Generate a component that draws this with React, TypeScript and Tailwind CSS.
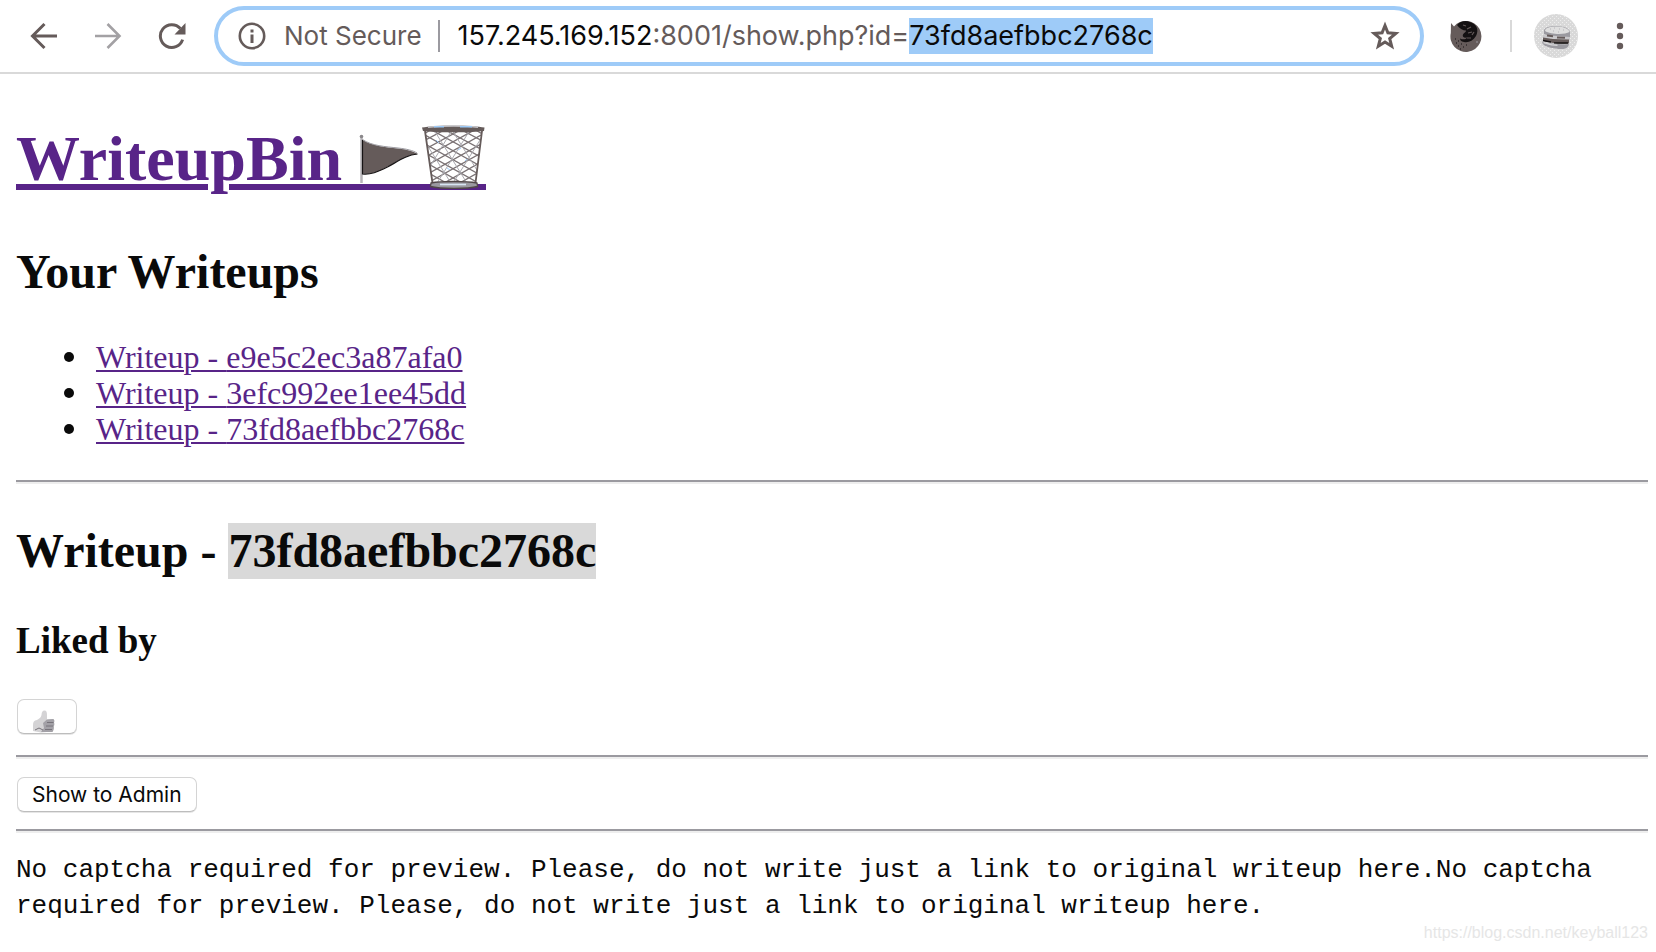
import React from "react";

const writeups = ["e9e5c2ec3a87afa0", "3efc992ee1ee45dd", "73fd8aefbbc2768c"];
const current = "73fd8aefbbc2768c";
const previewText =
  "No captcha required for preview. Please, do not write just a link to original writeup here.";

function BackIcon() {
  return (
    <svg width="28" height="28" viewBox="0 0 28 28" fill="none" stroke="currentColor" strokeWidth="3" aria-hidden="true">
      <path d="M27 14H3M14.5 2L2.5 14l12 12" />
    </svg>
  );
}

function ForwardIcon() {
  return (
    <svg width="28" height="28" viewBox="0 0 28 28" fill="none" stroke="currentColor" strokeWidth="2.6" aria-hidden="true">
      <path d="M1 14h24M13.5 2l12 12-12 12" />
    </svg>
  );
}

function ReloadIcon() {
  return (
    <svg width="28" height="28" viewBox="0 0 28 28" fill="none" aria-hidden="true">
      <path d="M24.6 17.6A11.4 11.4 0 1 1 22.4 6.6" stroke="currentColor" strokeWidth="3" />
      <path d="M27.5 1v11.500H16.500z" fill="currentColor" />
    </svg>
  );
}

function InfoIcon() {
  return (
    <svg width="28" height="28" viewBox="0 0 28 28" fill="none" aria-hidden="true">
      <circle cx="14" cy="14" r="12.2" stroke="currentColor" strokeWidth="2.6" />
      <path d="M12.500 12.500h3V21h-3zM12.500 7.500h3v3h-3z" fill="currentColor" />
    </svg>
  );
}

function StarIcon() {
  return (
    <svg width="30" height="30" viewBox="0 0 30 30" fill="none" stroke="currentColor" strokeWidth="3" aria-hidden="true">
      <path d="M15 4.500l2.900 7.300 7.900.6-6.100 5.100 2 7.800L15 21.100l-6.700 4.200 2-7.800-6.100-5.100 7.900-.6z" />
    </svg>
  );
}

function ExtensionIcon() {
  return (
    <svg width="32" height="32" viewBox="0 0 32 32" aria-hidden="true">
      <path d="M1 3l3 3.500A15.500 15.500 0 1 1 .8 13z" fill="#655b5a" />
      <path d="M7 5c3-4 9-5 13-3 7 2 9 8 6 14-3 5-8 7-12 6-3-.5-4-2-4-3.500 3 1.500 6 1 7-1-3 .5-5-.5-4-3 1-2 3-2 3-4-3 0-7-2-9-5.500z" fill="#141112" />
      <path d="M13 5l3 1M17 9l4-2M18 13l4-1M17 18l4 0M22 15l2-3" stroke="#655b5a" strokeWidth="1.200" />
      <path d="M6 23h1M8 26h1M11 24h1M13 27h1M16 25h1M5 19h1M8 21h1M10 29h1" stroke="#141112" strokeWidth="1.200" />
      <path d="M26 22h2" stroke="#9b9aa0" strokeWidth="1.200" />
    </svg>
  );
}

function BurgerAvatar() {
  return (
    <svg width="44" height="44" viewBox="0 0 44 44" aria-hidden="true">
      <defs>
        <pattern id="grain" width="4" height="4" patternUnits="userSpaceOnUse">
          <path d="M0 0h1v1H0zM2 2h1v1H2z" fill="#eeeeee" />
        </pattern>
      </defs>
      <circle cx="22" cy="22" r="22" fill="#d9d9d9" />
      <circle cx="22" cy="22" r="22" fill="url(#grain)" />
      <path d="M10 17c0-3.500 5-5 12-5s13 2 14 6v5c-8 1-19 0-26-3z" fill="#9b9aa0" />
      <path d="M11 17c0-3 4-4.500 11-4.500s13 2 13.500 5.500c-5 3-19 2.500-24.500-1z" fill="#dfdfdf" />
      <path d="M16 15h1M20 14h1M25 15h1M29 16h1M19 17h1M24 18h1" stroke="#b5b4b8" />
      <path d="M9 21l27 2v3l-27-2z" fill="#c9c8cb" />
      <path d="M13 21.500l6 .800M23 23.500l8 .3" stroke="#655b5a" strokeWidth="2" />
      <path d="M9 23.500l10 1.500 16 .5v4c-9 .5-19-.5-26-2.500z" fill="#655b5a" />
      <path d="M9 26.500l8 1.500M20 29l14 0" stroke="#171415" strokeWidth="1.500" />
      <path d="M8 27.500c8 2.500 18 3 27 2.500-.5 3.500-3 5-7 5-8 0-20-2-20-7.500z" fill="#9b9aa0" />
      <path d="M9.500 28.500l8 2.200 6 .5" stroke="#d4d4d6" strokeWidth="1.500" fill="none" />
    </svg>
  );
}

function FlagIcon() {
  return (
    <svg className="inline-block align-baseline" width="62" height="53" viewBox="1 0 62 53" overflow="visible" aria-label="flag" role="img">
      <path d="M1 57h62v6H1z" fill="currentColor" />
      <path d="M4.500 9v47" stroke="#b7b5b8" strokeWidth="2.500" />
      <circle cx="4.500" cy="9.500" r="1.800" fill="#8b888b" />
      <path d="M5 12.500C15 19 28 20 41 21.500 50 22.500 56 24 60.500 27 50 28 41 34 30 40 20 45.500 14 47.500 5 46.500z" fill="#655b5a" />
      <path d="M5.500 13v34c8 1 15-2 25-7 11-6 19-12 30-13" fill="none" stroke="#171415" strokeWidth="1.200" />
      <path d="M5.500 12.500C15 19 28 19.500 41 21c9 1 15 2.500 19 5" fill="none" stroke="#9b9aa0" strokeWidth="1" />
    </svg>
  );
}

function BinIcon() {
  return (
    <svg className="inline-block align-baseline" width="66" height="54" viewBox="0 0 66 54" overflow="visible" aria-label="wastebasket" role="img">
      <defs>
        <clipPath id="basket">
          <path d="M5 5h57l-6.500 54h-43z" />
        </clipPath>
      </defs>
      <path d="M0 58h66v6H0z" fill="currentColor" />
      <g clipPath="url(#basket)" fill="none" stroke="#7b7375" strokeWidth="1.300">
        <path d="M-4 4l66 37M-4 13l66 37M-4 22l66 37M-4 31l60 34M-4 40l50 28M-4 49l30 17M8 2l58 32M22 2l44 24M38 2l28 15M52 2l14 8" />
        <path d="M70 4L4 41M70 13L4 50M70 22L4 59M70 31L10 65M70 40L20 68M70 49L40 66M58 2L0 34M44 2L0 26M28 2L0 17M14 2L0 10" />
      </g>
      <g clipPath="url(#basket)" fill="none" stroke="#a9a8ae" strokeWidth="1">
        <path d="M4 14l30 48M14 4l36 58M32 4l28 45M60 14L30 62M50 4L14 62M32 4L8 44" />
        <path d="M16 14l3 3M38 24l3-2M27 42l3 2M45 35l2-2" stroke="#9ecbf8" />
      </g>
      <path d="M5 5l7.500 52M62 5l-6.500 52" stroke="#655b5a" strokeWidth="1.800" />
      <path d="M11 57c10-2 35-2 46 0l.5 3.500c-10 2.500-37 2.500-47 0z" fill="#9b9aa0" stroke="#514848" strokeWidth="1.300" />
      <path d="M20 58.500h26" stroke="#d9e6f3" strokeWidth="1.600" />
      <path d="M2 1.500C14-1 53-1 64.500 1.500l-.5 3.500c-10 1.800-51 1.800-61 0z" fill="#655b5a" />
      <path d="M8 1.200c14-1.500 38-1.500 50 0" stroke="#c5c4c8" strokeWidth="1.500" fill="none" />
      <path d="M14 .8h10M40 .8h12" stroke="#9ecbf8" strokeWidth="1.500" />
    </svg>
  );
}

function ThumbIcon() {
  return (
    <svg width="22" height="23" viewBox="0 0 22 23" aria-hidden="true">
      <path d="M0 15c0-3 1-4.500 4-5 3-1.500 4-3 4.500-5 .2-3 1-4.500 3-4.500s2.500 2 2.500 4.500v4.500l6-.5c1.500.5 1.500 2 1 3.500.5 1.500.3 3-.3 4 .3 2-.2 4-1.200 5L8 22.500 0 21z" fill="#d4d3d5" />
      <path d="M14 9.500l6-.5c1.500.5 1.500 2 1 3.500.5 1.500.3 3-.3 4 .3 2-.2 4-1.200 5.500H8l3-4-1-5z" fill="#a3a1a7" />
      <path d="M14 12.500h6.500M13 16h7M12 19.500h7M2 20l4-2 4 2" stroke="#77737a" strokeWidth="1" fill="none" />
    </svg>
  );
}

function Rule({ className }: { className: string }) {
  return <hr className={`h-1 border-0 border-t-2 border-t-[#9b9aa0] bg-[#eeeeee] ${className}`} />;
}

const buttonStyle =
  "flex h-[35px] items-center rounded-[7px] border border-[#d4d4d4] border-b-[#bdbdbd] bg-white shadow-[0_1px_0_#e6e6e6]";

function Toolbar() {
  return (
    <header className="flex h-[74px] items-center border-b-2 border-[#d9d9d9] pr-7 pl-[30px] font-[Inter,sans-serif] text-[#655b5a]">
      <nav aria-label="History" className="flex gap-9">
        <button type="button" aria-label="Back"><BackIcon /></button>
        <button type="button" aria-label="Forward" className="text-[#a3a1a4]"><ForwardIcon /></button>
        <button type="button" aria-label="Reload"><ReloadIcon /></button>
      </nav>
      <div className="ml-7 flex h-[60px] min-w-0 flex-1 items-center rounded-full border-4 border-[#9ecbf8] pr-5 pl-5">
        <button type="button" className="flex shrink-0 items-center gap-[18px] text-[26px]">
          <InfoIcon />
          <span>Not Secure</span>
        </button>
        <span className="mr-[18px] ml-4 h-8 w-0.5 shrink-0 bg-[#9b9aa0]" />
        <label htmlFor="writeup-id" className="flex h-9 min-w-0 flex-1 items-center text-[27px] whitespace-nowrap">
          <span className="text-[#0a0a0a]">157.245.169.152</span>
          <span>:8001/show.php?id=</span>
          <input
            id="writeup-id"
            type="text"
            defaultValue={current}
            className="field-sizing-content h-9 bg-[#9ecbf8] text-[#0a0a0a] outline-none"
          />
        </label>
        <button type="button" aria-label="Bookmark this page"><StarIcon /></button>
      </div>
      <button type="button" aria-label="Extension" className="ml-[26px]"><ExtensionIcon /></button>
      <span className="ml-7 h-8 w-0.5 bg-[#d9d9d9]" />
      <button type="button" aria-label="Profile" className="ml-[22px]"><BurgerAvatar /></button>
      <button type="button" aria-label="Menu" className="ml-[34px] px-1">
        <svg width="8" height="28" viewBox="0 0 8 28" fill="currentColor" aria-hidden="true">
          <circle cx="4" cy="4" r="3.200" />
          <circle cx="4" cy="14" r="3.200" />
          <circle cx="4" cy="24" r="3.200" />
        </svg>
      </button>
    </header>
  );
}

export default function App() {
  return (
    <div className="min-h-screen bg-white font-['Liberation_Serif',serif] text-[32px] leading-9 text-[#0a0a0a]">
      <Toolbar />
      <main className="pr-2 pl-4">
        <h1 className="mt-12 h-[74px] text-[64px] leading-[74px] font-bold">
          <a href="#home" className="whitespace-nowrap text-[#582488] underline decoration-[6px] underline-offset-4">
            WriteupBin <FlagIcon /><BinIcon />
          </a>
        </h1>
        <h2 className="mt-12 text-[48px] leading-14 font-bold">Your Writeups</h2>
        <ul className="mt-[39px] pl-12">
          {writeups.map((id) => (
            <li
              key={id}
              className="flex items-center gap-[22px] before:size-2.5 before:rounded-full before:bg-[#0a0a0a] before:content-['']"
            >
              <a href={`#${id}`} className="text-[#582488] underline decoration-2 underline-offset-2">
                Writeup - {id}
              </a>
            </li>
          ))}
        </ul>
        <Rule className="mt-[33px]" />
        <h2 className="mt-[39px] text-[48px] leading-14 font-bold">
          Writeup - <mark className="inline-block bg-[#d9d9d9] text-inherit">{current}</mark>
        </h2>
        <h3 className="mt-[41px] text-[37px] leading-[42px] font-bold">Liked by</h3>
        <button type="button" aria-label="Like" className={`mt-[37px] ml-px w-[60px] items-end pl-[15px] ${buttonStyle}`}>
          <span className="mt-2.5"><ThumbIcon /></span>
        </button>
        <Rule className="mt-[21px]" />
        <button type="button" className={`mt-[18px] ml-px px-3.5 font-[Inter,sans-serif] text-[21px] ${buttonStyle}`}>
          Show to Admin
        </button>
        <Rule className="mt-[17px]" />
        <pre className="mt-[19px] font-['Liberation_Mono',monospace] text-[26px] leading-9 whitespace-pre-wrap">
          {previewText + previewText}
        </pre>
      </main>
      <footer className="pr-2 text-right font-['Liberation_Sans',sans-serif] text-base leading-[18px] text-[#e6e6e6]">
        https://blog.csdn.net/keyball123
      </footer>
    </div>
  );
}
